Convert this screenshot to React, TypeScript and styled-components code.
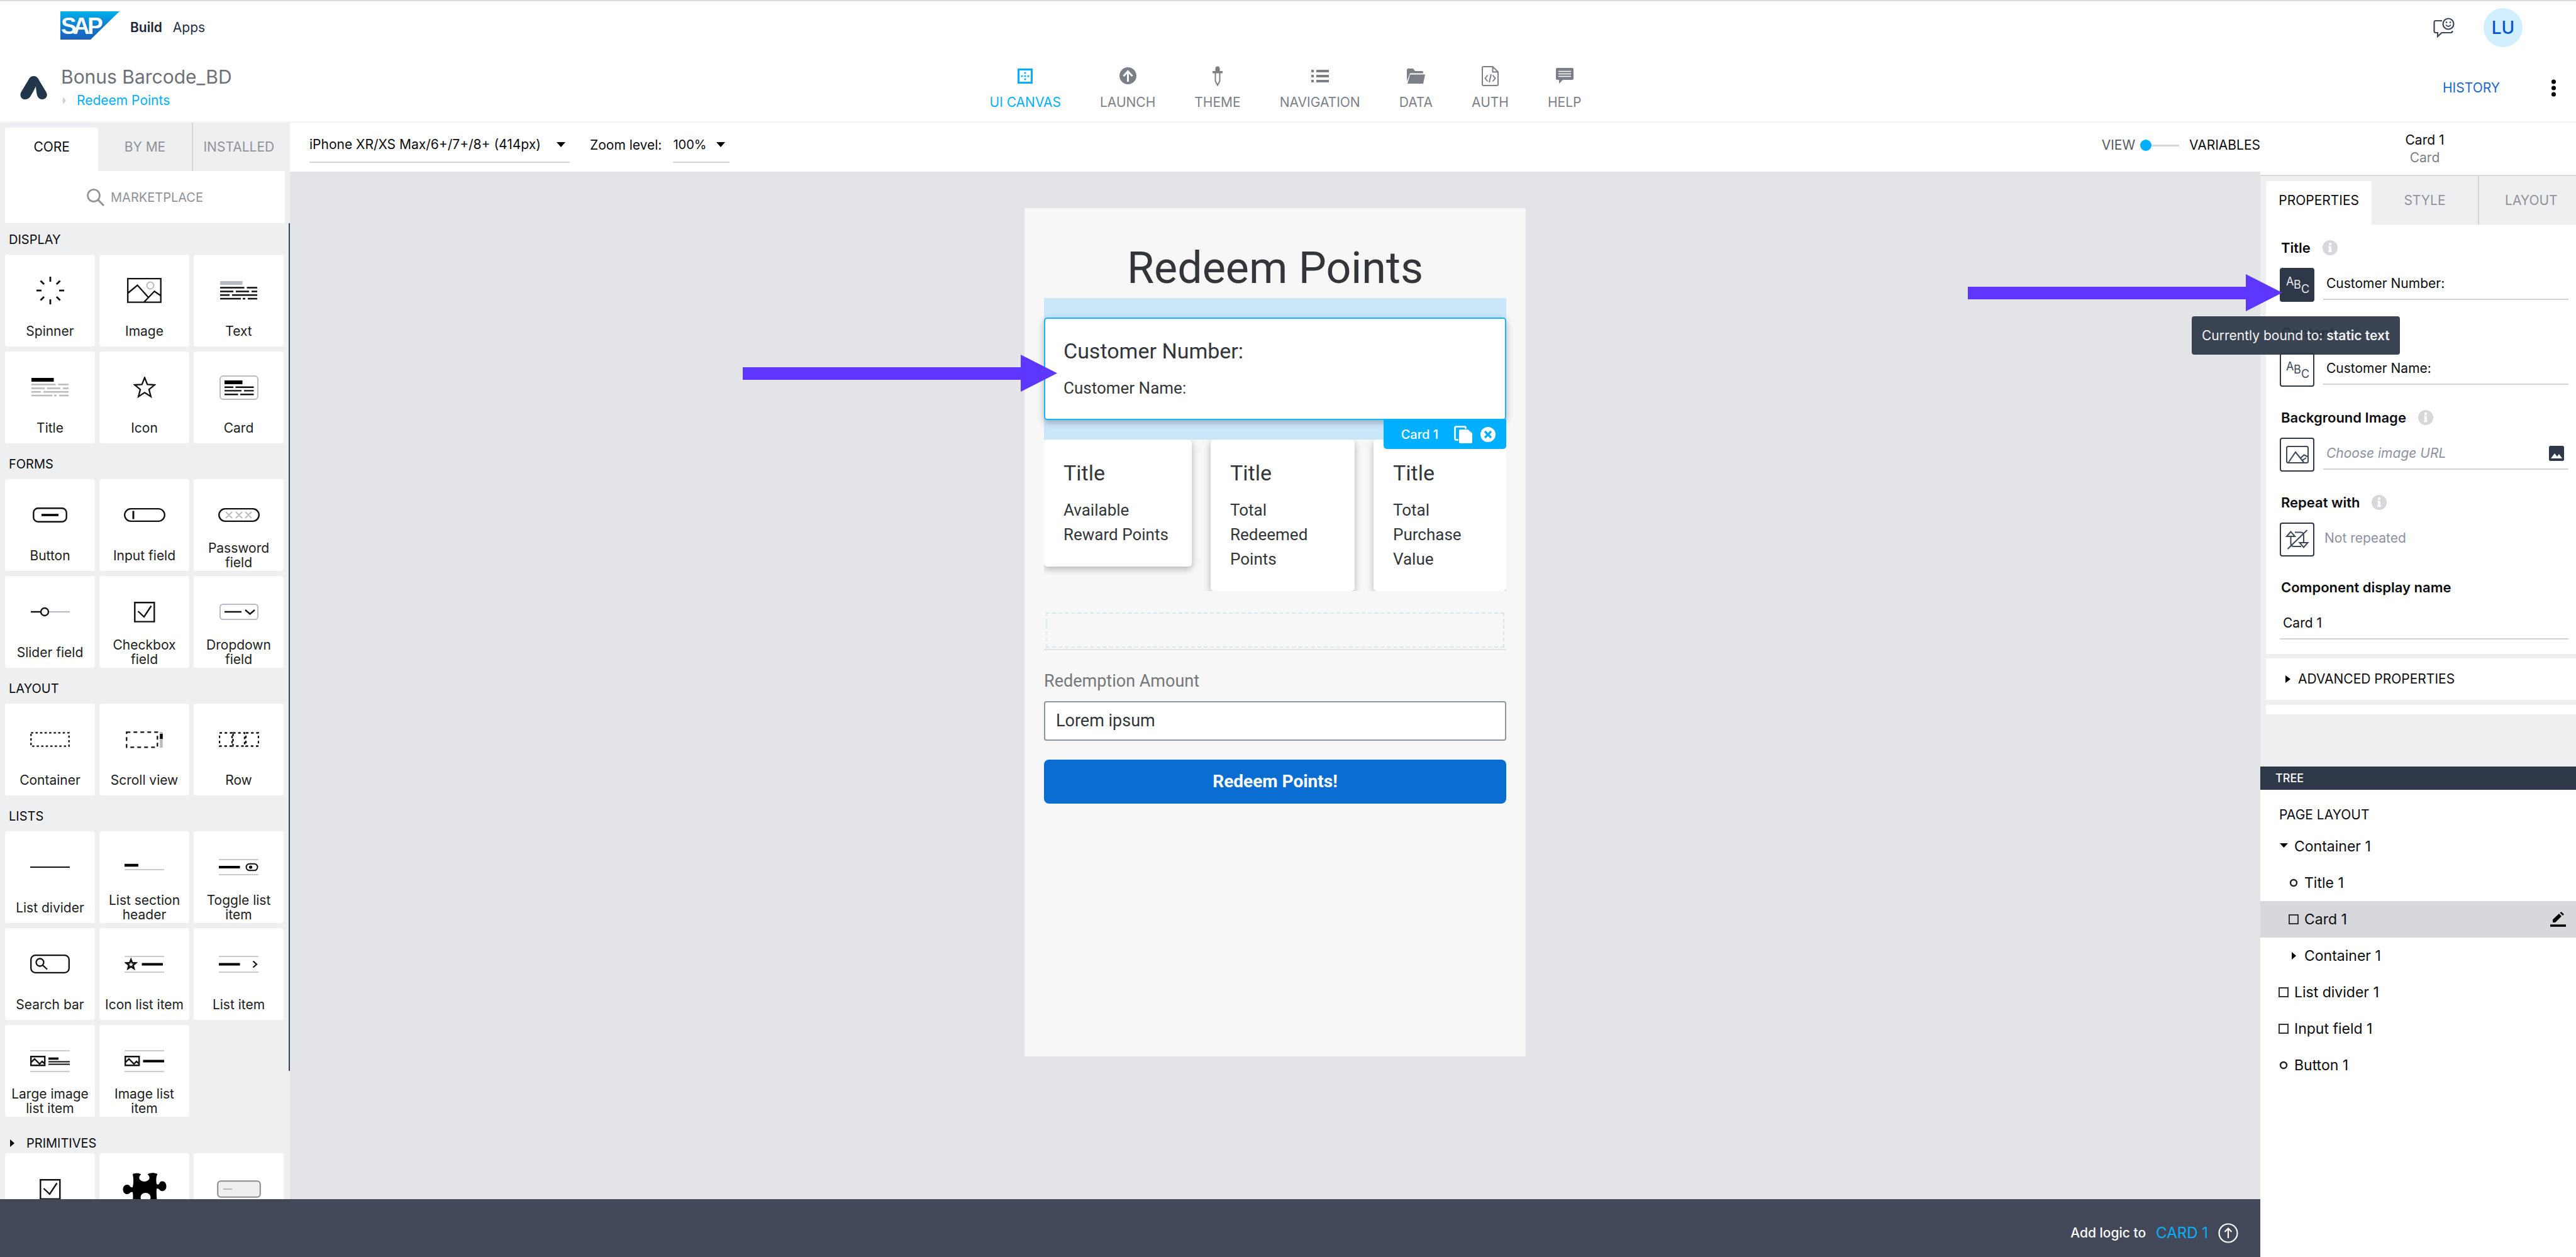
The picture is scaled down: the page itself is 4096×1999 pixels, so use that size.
import React from "react";
import styled, { createGlobalStyle, css } from "styled-components";

const ui = `Inter, "Liberation Sans", sans-serif`;
const device = `Roboto, "Liberation Sans", sans-serif`;
const c = {
  ink: "#0b0c0f",
  navy: "#2f3848",
  slate: "#434858",
  grey: "#7b7f88",
  muted: "#8f9299",
  line: "#d5d6dc",
  panel: "#eeeff1",
  canvas: "#e3e4e8",
  sky: "#00b0ff",
  faint: "#b9bbc2",
};

const Global = createGlobalStyle`
  *, *::before, *::after { box-sizing: border-box; }
  body { margin: 0; background: #fff; overflow: hidden; }
  button, input, select { font: inherit; color: inherit; margin: 0; }
  h1, h2, h3, p, ul { margin: 0; padding: 0; font-weight: 400; }
  li { list-style: none; }
  svg { display: block; flex: none; }
`;

const Shell = styled.div`
  display: flex;
  flex-direction: column;
  height: 100vh;
  overflow: hidden;
  background: #fff;
  color: ${c.ink};
  font: 400 21px/28px ${ui};
`;
const BareButton = styled.button`
  display: flex;
  align-items: center;
  padding: 0;
  border: 0;
  background: none;
  cursor: pointer;
`;

/* ---------- header ---------- */
const Header = styled.header`
  flex: none;
  border-top: 2px solid #dddddd;
  border-bottom: 2px solid #f5f5f6;
`;
const TopBar = styled.div`
  display: flex;
  align-items: center;
  justify-content: space-between;
  height: 84px;
  padding: 0 85px 0 96px;
`;
const Brand = styled.div`
  display: flex;
  align-items: center;
  gap: 17px;
  color: #223044;
  strong { font-weight: 600; color: #1a2433; }
  svg { margin-bottom: 8px; }
`;
const Account = styled.div`
  display: flex;
  align-items: center;
  gap: 46px;
`;
const Avatar = styled(BareButton)`
  justify-content: center;
  width: 62px;
  height: 62px;
  border-radius: 50%;
  background: #d1efff;
  color: #0a55cf;
  font-size: 28px;
  font-weight: 500;
`;
const ProjectBar = styled.div`
  display: grid;
  grid-template-columns: 1fr auto 1fr;
  align-items: center;
  height: 107px;
  padding: 0 32px;
`;
const Project = styled.div`
  display: flex;
  align-items: center;
  gap: 22px;
`;
const ProjectName = styled.h1`
  font-size: 30px;
  line-height: 40px;
  color: #6c7078;
`;
const Crumb = styled.div`
  display: flex;
  align-items: center;
  gap: 17px;
  height: 36px;
  padding-left: 3px;
  a { color: ${c.sky}; text-decoration: none; }
`;
const Nav = styled.nav`
  display: flex;
  gap: 62px;
  margin-right: 8px;
  padding-top: 2px;
`;
const NavItem = styled.a<{ $active?: boolean }>`
  display: flex;
  flex-direction: column;
  align-items: center;
  gap: 12px;
  color: ${(p) => (p.$active ? c.sky : c.grey)};
  text-decoration: none;
`;
const NavIcon = styled.span`
  display: flex;
  align-items: center;
  height: 32px;
`;
const ProjectActions = styled.div`
  display: flex;
  align-items: center;
  justify-content: flex-end;
  gap: 82px;
  a { color: #1b66cf; text-decoration: none; }
`;

/* ---------- page body ---------- */
const Body = styled.div`
  flex: 1;
  min-height: 0;
  display: grid;
  grid-template-columns: minmax(0, 1fr) 502px;
`;
const Workspace = styled.div`
  display: flex;
  flex-direction: column;
  min-height: 0;
`;
const Upper = styled.div`
  flex: 1;
  min-height: 0;
  display: flex;
`;
const TabBar = styled.div`
  flex: none;
  display: grid;
  grid-template-columns: repeat(3, 1fr);
  height: 77px;
`;
const Tab = styled.button<{ $active?: boolean; $divided?: boolean }>`
  padding: 8px 0 7px;
  border: 0;
  border-left: ${(p) => (p.$divided ? `2px solid #d3d5da` : "0")};
  background: none;
  color: ${c.muted};
  ${(p) =>
    p.$active &&
    css`
      margin-top: 8px;
      padding-top: 0;
      border-radius: 4px 4px 0 0;
      background: #fff;
      color: ${c.ink};
    `}
`;

/* ---------- component library ---------- */
const Library = styled.aside`
  flex: none;
  display: flex;
  flex-direction: column;
  width: 461px;
  padding: 0 8px;
  background: ${c.panel};
`;
const Marketplace = styled(BareButton)`
  flex: none;
  justify-content: center;
  gap: 10px;
  height: 83px;
  background: #fff;
  color: ${c.muted};
  font-size: 20px;
`;
const Catalogue = styled.div`
  position: relative;
  flex: 1;
  min-height: 0;
  overflow: hidden;
  margin-right: -8px;
  padding-right: 10px;
`;
const ScrollThumb = styled.span`
  position: absolute;
  top: 0;
  right: 0;
  width: 2px;
  height: 1348px;
  background: #35425a;
`;
const Section = styled.section`
  padding-top: 19px;
  &:first-of-type { padding-top: 12px; }
`;
const SectionTitle = styled.h2`
  display: flex;
  align-items: center;
  height: 28px;
  margin-bottom: 10px;
  padding-left: 6px;
  font-size: 20px;
`;
const Primitives = styled(Section)`
  padding-top: 28px;
  ${SectionTitle} { gap: 19px; padding-left: 8px; margin-bottom: 2px; }
`;
const Tiles = styled.div`
  display: grid;
  grid-template-columns: repeat(3, 1fr);
  grid-auto-rows: 146px;
  gap: 8px 7px;
`;
const Tile = styled.button`
  display: flex;
  flex-direction: column;
  align-items: center;
  padding: 16px 4px 0;
  border: 0;
  border-radius: 4px;
  background: #fff;
  color: #1c1d21;
`;
const TileIcon = styled.span`
  flex: none;
  display: flex;
  align-items: center;
  height: 82px;
`;
const TileLabel = styled.span`
  display: flex;
  align-items: center;
  height: 46px;
  line-height: 23px;
`;

/* ---------- canvas ---------- */
const Stage = styled.main`
  flex: 1;
  min-width: 0;
  display: flex;
  flex-direction: column;
  background: ${c.canvas};
`;
const Toolbar = styled.div`
  flex: none;
  display: flex;
  justify-content: space-between;
  height: 78px;
  padding: 8px 0 0 31px;
  background: #fff;
`;
const ToolGroup = styled.div`
  display: flex;
  align-items: center;
  height: 56px;
`;
const Picker = styled.span<{ $wide?: boolean }>`
  position: relative;
  width: ${(p) => (p.$wide ? 414 : 90)}px;
  margin: ${(p) => (p.$wide ? "0 32px 0 0" : "0 0 0 18px")};
  &::after {
    content: "";
    position: absolute;
    right: 7px;
    top: 23px;
    border: 7px solid transparent;
    border-top: 8px solid #000;
    border-bottom: 0;
    pointer-events: none;
  }
  select {
    width: 100%;
    height: 56px;
    padding: 0;
    border: 0;
    border-bottom: 2px solid ${c.line};
    border-radius: 0;
    background: none;
    appearance: none;
    font-size: ${(p) => (p.$wide ? 21 : 20)}px;
  }
`;
const ViewSwitch = styled.label`
  display: flex;
  align-items: center;
  gap: 8px;
  color: #555962;
  b { margin-left: 8px; color: ${c.ink}; font-weight: 400; }
  input {
    appearance: none;
    display: flex;
    align-items: center;
    width: 62px;
    height: 18px;
    background: linear-gradient(${c.line}, ${c.line}) center / 100% 3px no-repeat;
  }
  input::before {
    content: "";
    width: 18px;
    height: 18px;
    border-radius: 50%;
    background: ${c.sky};
  }
`;
const Board = styled.div`
  flex: 1;
  min-height: 0;
  display: flex;
  justify-content: center;
  align-items: flex-start;
  padding-top: 58px;
`;
const Phone = styled.article`
  display: flex;
  flex-direction: column;
  width: 797px;
  min-height: 1349px;
  padding: 48px 31px 0;
  background: #f7f7f7;
  color: #32363a;
  font-family: ${device};
`;
const PhoneTitle = styled.h2`
  font-size: 70px;
  line-height: 95px;
  text-align: center;
`;
const SelectedArea = styled.div`
  position: relative;
  padding: 31px 0;
  background: #cae7f9;
`;
const DeviceCard = styled.section<{ $selected?: boolean }>`
  padding: 31px;
  background: #fff;
  border-radius: 5px;
  box-shadow: 0 4px 12px rgba(0, 0, 0, 0.28);
  font-size: 26px;
  line-height: 39px;
  h3 { margin-bottom: 18px; line-height: 44px; font-size: 34px; }
  ${(p) =>
    p.$selected &&
    css`
      padding: 29px;
      border: 2px solid #16b3ff;
    `}
`;
const CardRow = styled.div`
  display: grid;
  grid-template-columns: 235fr 229fr 211fr;
  align-items: start;
  gap: 30px;
  overflow: hidden;
`;
const CardTag = styled.div`
  position: absolute;
  z-index: 2;
  right: 0;
  bottom: -15px;
  display: flex;
  align-items: center;
  height: 47px;
  padding: 0 17px 0 28px;
  border-radius: 0 0 5px 5px;
  background: ${c.sky};
  color: #fff;
  font: 500 20px/28px ${ui};
  button + button { margin-left: 13px; }
  span { margin-right: 25px; }
`;
const Arrow = styled.svg`
  position: absolute;
  z-index: 5;
  width: 500px;
  height: 59px;
`;
const CanvasArrow = styled(Arrow)`
  top: 90px;
  right: calc(100% - 21px);
`;
const FieldArrow = styled(Arrow)`
  top: 10px;
  right: calc(100% - 4px);
`;
const ListDivider = styled.div`
  height: 63px;
  margin-top: 31px;
  padding: 3px 3px 2px;
  border-bottom: 2px solid #e1e1e1;
  &::before {
    content: "";
    display: block;
    height: 100%;
    border: 2px dashed #d5e8eb;
  }
`;
const DeviceLabel = styled.label`
  margin: 30px 0 12px;
  color: #74777a;
  font-size: 27px;
  line-height: 39px;
`;
const DeviceInput = styled.input`
  height: 63px;
  padding: 0 17px 2px;
  border: 2px solid #8e959d;
  border-radius: 4px;
  background: #fff;
  font-size: 27px;
`;
const DeviceButton = styled.button`
  height: 70px;
  margin-top: 30px;
  border: 0;
  border-radius: 8px;
  background: #096dd2;
  color: #fff;
  font-size: 28px;
  font-weight: 700;
`;
const LogicBar = styled.footer`
  flex: none;
  display: flex;
  align-items: center;
  justify-content: flex-end;
  gap: 16px;
  height: 92px;
  padding: 16px 35px 0 0;
  background: ${c.slate};
  color: #fff;
  font-weight: 500;
  a { color: #0ab0fb; font-size: 24px; font-weight: 400; text-decoration: none; }
`;

/* ---------- inspector ---------- */
const Inspector = styled.aside`
  display: flex;
  flex-direction: column;
  min-height: 0;
  background: ${c.panel};
`;
const InspectorTop = styled.div`
  flex: 1024 1 0;
  min-height: 0;
  width: calc(100% + 12px);
`;
const Subject = styled.div`
  height: 85px;
  padding: 14px 0 0 9px;
  border-bottom: 2px solid #d8d9dd;
  background: #fff;
  text-align: center;
  p:last-child { color: ${c.grey}; }
`;
const InspectorBody = styled.div`
  display: flex;
  flex-direction: column;
  padding-left: 9px;
`;
const Sheet = styled.div`
  display: flex;
  flex-direction: column;
  gap: 33px;
  padding: 21px 24px 23px 22px;
  background: #fff;
`;
const Field = styled.div`
  display: flex;
  flex-direction: column;
  gap: 16px;
`;
const FieldLabel = styled.label`
  display: flex;
  align-items: center;
  gap: 19px;
  height: 32px;
  padding-left: 2px;
  font-size: 22px;
  font-weight: 600;
`;
const FieldRow = styled.div`
  position: relative;
  display: flex;
  gap: 14px;
  height: 54px;
`;
const Binding = styled.button<{ $on?: boolean }>`
  flex: none;
  display: flex;
  align-items: center;
  justify-content: center;
  width: 55px;
  height: 54px;
  padding: 0;
  border: 2px solid ${c.navy};
  border-radius: 4px;
  background: ${(p) => (p.$on ? c.navy : "#fff")};
  color: ${(p) => (p.$on ? "#e9ebee" : "#3e4758")};
`;
const Line = styled.span`
  flex-grow: 1;
  display: flex;
  align-items: center;
  height: 51px;
  padding: 0 7px 0 5px;
  border-bottom: 2px solid #d3d4d8;
  input {
    flex: 1;
    min-width: 0;
    padding: 0;
    border: 0;
    outline: 0;
    background: none;
    line-height: 28px;
  }
  input::placeholder { color: #8d919f; font-style: italic; opacity: 1; }
`;
const Note = styled.p`
  padding: 11px 0 0 2px;
  color: #8d919f;
`;
const Tooltip = styled.div`
  position: absolute;
  z-index: 4;
  top: 77px;
  left: -140px;
  display: flex;
  align-items: center;
  gap: 6px;
  height: 61px;
  padding: 0 16px;
  border-radius: 4px;
  background: rgba(47, 56, 72, 0.94);
  color: #f3f4f6;
  white-space: nowrap;
  font-weight: 400;
  b { font-weight: 600; }
`;
const Advanced = styled(BareButton)`
  gap: 12px;
  height: 66px;
  margin: 7px 0 8px;
  padding-left: 31px;
  background: #fff;
`;
const SheetEnd = styled.div`
  height: 15px;
  background: #fff;
`;
const Tree = styled.section`
  flex: 780 1 0;
  min-height: 0;
  background: #fff;
`;
const TreeTitle = styled.h2`
  height: 37px;
  padding-left: 24px;
  background: ${c.navy};
  color: #fff;
  font-size: 18px;
  font-weight: 500;
  line-height: 37px;
`;
const TreeRoot = styled.h3`
  padding: 24px 0 5px 30px;
  font-size: 21px;
  line-height: 32px;
`;
const TreeRow = styled.li<{ $deep?: boolean; $selected?: boolean }>`
  display: flex;
  align-items: center;
  gap: 8px;
  height: 58px;
  padding: 0 16px 0 ${(p) => (p.$deep ? 44 : 28)}px;
  background: ${(p) => (p.$selected ? "#d7d8dc" : "none")};
  font-size: 23px;
  button { margin-left: auto; }
`;

/* ---------- drawings ---------- */
const stroke = (w: number, color = "#111") => ({ stroke: color, strokeWidth: w, fill: "none" });

const star = "M18 1.5l4.3 10.9 11.7.6-9.1 7.4 3 11.3L18 25.4l-9.9 6.3 3-11.3L2 13l11.7-.6z";

const TextLines = ({ bar, lines }: { bar: string; lines: string }) => (
  <svg width="60" height="30" viewBox="0 0 60 30">
    <path d="M0 3h35.5" {...stroke(6, bar)} />
    <path d="M0 10.5h38.500M42.500 10.500H59M0 16.500h21M25 16.500h21M50 16.500h9M0 22.200h15M19 22.200h40M0 28h33M36 28h4M44 28h15" {...stroke(2.4, lines)} />
  </svg>
);
const Rules = ({ h = 26, children }: { h?: number; children: React.ReactNode }) => (
  <svg width="63" height={h} viewBox={`0 0 63 ${h}`}>
    <path d={`M0 1h63M0 ${h - 1}h63`} {...stroke(1.6, c.faint)} />
    {children}
  </svg>
);
const MiniPicture = () => <path d="M1.200 10.200h22v14h-22zM2 19l5-5 8 8 4-4 4 3.500" {...stroke(2.4)} />;
const CheckBox = () => (
  <svg width="34" height="33" viewBox="0 0 34 33">
    <path d="M1.300 1.300h31v30.300h-31zM6.500 15l9.500 9L27.500 6.500" {...stroke(2.4)} />
  </svg>
);

const icons: Record<string, React.ReactNode> = {
  Spinner: (
    <svg width="46" height="46" viewBox="-23 -23 46 46">
      {[0, 45, 90, 135, 180, 225, 270, 315].map((a) => (
        <path key={a} d="M14 0h8" transform={`rotate(${a})`} {...stroke(2.8)} />
      ))}
    </svg>
  ),
  Image: (
    <svg width="55" height="40" viewBox="0 0 55 40">
      <circle cx="37" cy="12" r="5.500" {...stroke(2, c.faint)} />
      <path d="M1.200 1.200h52.500v37.500H1.200zM1 24.500L16.500 11.500 34 31M27 38.500l16.500-17.300L54 28.500" {...stroke(2.3)} />
    </svg>
  ),
  Text: <TextLines bar={c.faint} lines="#111" />,
  Title: <TextLines bar="#000" lines={c.faint} />,
  Icon: (
    <svg width="36" height="34" viewBox="0 0 36 34">
      <path d={star} {...stroke(2.3)} />
    </svg>
  ),
  Card: (
    <svg width="62" height="39" viewBox="0 0 62 39">
      <rect x="1" y="1" width="60" height="37" rx="5" {...stroke(2, c.faint)} />
      <path d="M8 11h28.500" {...stroke(6, "#000")} />
      <path d="M8 18.800h14M25.500 18.800H54.500M8 24.400h27M39 24.400h15.500M8 30.200h21.500M33 30.200h21.500" {...stroke(2.4)} />
    </svg>
  ),
  Button: (
    <svg width="55" height="24" viewBox="0 0 55 24">
      <rect x="1.300" y="1.300" width="52.400" height="21.400" rx="7" {...stroke(2.4)} />
      <path d="M14 12h27" {...stroke(3.6, "#000")} />
    </svg>
  ),
  "Input field": (
    <svg width="66" height="22" viewBox="0 0 66 22">
      <rect x="1.200" y="1.200" width="63.600" height="19.600" rx="9.800" {...stroke(2.3)} />
      <path d="M15 4.500v13" {...stroke(3)} />
    </svg>
  ),
  "Password field": (
    <svg width="66" height="22" viewBox="0 0 66 22">
      <rect x="1.200" y="1.200" width="63.600" height="19.600" rx="9.800" {...stroke(2.3)} />
      <path d="M12 6l10 10M22 6L12 16M28 6l10 10M38 6L28 16M43 6l10 10M53 6L43 16" {...stroke(2, c.faint)} />
    </svg>
  ),
  "Slider field": (
    <svg width="62" height="16" viewBox="0 0 62 16">
      <path d="M29 8h33" {...stroke(2.2, c.faint)} />
      <path d="M0 8h16" {...stroke(2.4)} />
      <circle cx="22" cy="8" r="6" {...stroke(2.4)} />
    </svg>
  ),
  "Checkbox field": <CheckBox />,
  "Dropdown field": (
    <svg width="62" height="26" viewBox="0 0 62 26">
      <rect x="1" y="1" width="60" height="24" rx="4.500" {...stroke(2, c.faint)} />
      <path d="M8 13h27M41 10l7.500 6.500L56 10" {...stroke(2.4)} />
    </svg>
  ),
  Container: (
    <svg width="63" height="24" viewBox="0 0 63 24">
      <rect x="1.300" y="1.300" width="60.400" height="21.400" strokeDasharray="3.600 3.600" {...stroke(2.3)} />
    </svg>
  ),
  "Scroll view": (
    <svg width="60" height="27" viewBox="0 0 60 27">
      <rect x="1.300" y="1.300" width="49" height="24" strokeDasharray="6 5" {...stroke(2.3)} />
      <path d="M56.500 1v25" {...stroke(4.500, c.faint)} />
      <path d="M56.500 4v8" {...stroke(4.500, "#000")} />
    </svg>
  ),
  Row: (
    <svg width="64" height="24" viewBox="0 0 64 24">
      <path d="M1 1.500h20v21H1zM22.500 1.500h18.500v21H22.500zM43 1.500h20v21H43z" strokeDasharray="4 4.200" {...stroke(2.4)} />
    </svg>
  ),
  "List divider": (
    <svg width="63" height="4" viewBox="0 0 63 4">
      <path d="M0 2h63" {...stroke(2.2)} />
    </svg>
  ),
  "List section header": (
    <svg width="63" height="12" viewBox="0 0 63 12">
      <path d="M0 3h22" {...stroke(4.500, "#000")} />
      <path d="M0 10h63" {...stroke(1.6, c.faint)} />
    </svg>
  ),
  "Toggle list item": (
    <Rules>
      <path d="M0 13h33.500" {...stroke(4, "#000")} />
      <rect x="43.500" y="7.700" width="18" height="10.600" rx="5.300" {...stroke(2)} />
      <circle cx="50.500" cy="13" r="2.600" />
    </Rules>
  ),
  "Search bar": (
    <svg width="63" height="30" viewBox="0 0 63 30">
      <rect x="1.200" y="1.200" width="60.600" height="27.600" rx="7" {...stroke(2.3)} />
      <circle cx="15.500" cy="12.500" r="6" {...stroke(2.3)} />
      <path d="M20 17l7 6.500" {...stroke(2.3)} />
    </svg>
  ),
  "Icon list item": (
    <Rules h={27}>
      <path d={star} transform="translate(2 5.500) scale(.46)" {...stroke(6)} />
      <path d="M27.500 13.500H61" {...stroke(4, "#000")} />
    </Rules>
  ),
  "List item": (
    <Rules h={27}>
      <path d="M0 13.500h33.500" {...stroke(4, "#000")} />
      <path d="M54.500 8.500l5.500 5-5.500 5" {...stroke(2.2)} />
    </Rules>
  ),
  "Large image list item": (
    <Rules h={35}>
      <MiniPicture />
      <path d="M29 13.500h16" {...stroke(3.6, "#000")} />
      <path d="M29 18.500h34M29 22.500h34" {...stroke(2)} />
    </Rules>
  ),
  "Image list item": (
    <Rules h={35}>
      <MiniPicture />
      <path d="M29.500 17.500H63" {...stroke(4, "#000")} />
    </Rules>
  ),
  Checkbox: <CheckBox />,
  Puzzle: (
    <svg width="70" height="52" viewBox="0 0 70 52">
      <path d="M16 2c5-2 10-1.500 13.500.500-3.500 2.500-4 6-2 8.500 3.500 4 10.500 4 14 0 2-2.500 1.500-6-2-8.500C44-.500 50-.500 55.500 2c-2.500 5-2.500 10-1.500 16 3.500 2 4-.500 5.500-3 4-3.500 10-.500 10 6.500s-6 9.500-10 6.500c-1.500-2-2.500-3.500-5.500-2.500-.500 6 0 16 1.500 24.500H15c1.500-7 2-12 1-19-3-1-4 .500-5.500 2C6 36 .500 32.500.500 26.500S6 17 10.500 20c1.500 2 2.500 4 5.500 3 1.500-7 1.500-14 0-21z" />
      <ellipse cx="36.500" cy="39" rx="8" ry="7" fill="#fff" />
    </svg>
  ),
  "Text box": (
    <svg width="70" height="28" viewBox="0 0 70 28">
      <rect x="1.200" y="1.200" width="67.600" height="25.600" rx="5" stroke="#8a8a8a" strokeWidth="2" fill="#efefef" />
      <path d="M10 14h14" {...stroke(1.600, "#aaa")} />
    </svg>
  ),
};

const navItems: { label: string; icon: React.ReactNode }[] = [
  {
    label: "UI CANVAS",
    icon: (
      <svg width="24" height="26" viewBox="0 0 24 26" fill="currentColor">
        <rect x="1.500" y="2.500" width="21" height="21" {...stroke(3, "currentColor")} />
        {[[12, 8], [12, 13], [12, 18], [7, 13], [17, 13]].map(([x, y]) => (
          <circle key={`${x}-${y}`} cx={x} cy={y} r="1.600" />
        ))}
      </svg>
    ),
  },
  {
    label: "LAUNCH",
    icon: (
      <svg width="27" height="27" viewBox="0 0 27 27">
        <circle cx="13.500" cy="13.500" r="13.500" fill="currentColor" />
        <path d="M13.500 23V8M6.500 14l7-7.500 7 7.500" {...stroke(3, "#fff")} />
      </svg>
    ),
  },
  {
    label: "THEME",
    icon: (
      <svg width="16" height="32" viewBox="0 0 16 32">
        <path d="M4.500 8V4a3.500 3.500 0 0 1 7 0v4H16v3.500H0V8z" fill="currentColor" />
        <path d="M4.500 11v13L8 30.500l3.500-6.500V11" {...stroke(2, "currentColor")} />
      </svg>
    ),
  },
  {
    label: "NAVIGATION",
    icon: (
      <svg width="28" height="24" viewBox="0 0 28 24">
        <path d="M8 4h20M8 12h20M8 20h20M0 4h4M0 12h4M0 20h4" {...stroke(4, "currentColor")} />
      </svg>
    ),
  },
  {
    label: "DATA",
    icon: (
      <svg width="29" height="24" viewBox="0 0 29 24" fill="currentColor">
        <path d="M0 2q0-2 2-2h8l3 4h11q2 0 2 2v1.500H5L0 20z" />
        <path d="M5 9.500h24L26 24H1z" />
      </svg>
    ),
  },
  {
    label: "AUTH",
    icon: (
      <svg width="27" height="32" viewBox="0 0 27 32">
        <path d="M3 1h14.500L26 9.500V29q0 2-2 2H3q-2 0-2-2V3q0-2 2-2zM17.500 1v8.500H26" {...stroke(2, "currentColor")} />
        <path d="M9.500 14.500l-4 5 4 5M17.500 14.500l4 5-4 5M15 13l-3 13" {...stroke(2, "currentColor")} />
      </svg>
    ),
  },
  {
    label: "HELP",
    icon: (
      <svg width="28" height="25" viewBox="0 0 28 25">
        <path d="M2 0h24q2 0 2 2v15q0 2-2 2H11l-6 6v-6H2q-2 0-2-2V2q0-2 2-2z" fill="currentColor" />
        <path d="M4 5.500h20M4 9.500h20M4 13.500h20" {...stroke(1.600, "#fff")} />
      </svg>
    ),
  },
];

const Triangle = ({ down }: { down?: boolean }) => (
  <svg width="18" height="18" viewBox="0 0 18 18">
    <path d={down ? "M3 4h13L9.500 11z" : "M6 3l7 6-7 6z"} />
  </svg>
);
const Info = () => (
  <svg width="24" height="24" viewBox="0 0 24 24">
    <circle cx="12" cy="12" r="12" fill="#d7d8dc" />
    <path d="M12 9.500v9" {...stroke(4, "#fff")} />
    <path d="M9.500 10.500H12M9 18h6" {...stroke(2, "#fff")} />
    <circle cx="12" cy="6" r="2.200" fill="#fff" />
  </svg>
);
const Abc = () => (
  <svg width="50" height="50" viewBox="0 0 50 50" fill="currentColor" fontFamily="Inter, sans-serif" fontSize="18">
    <text x="7" y="26">A</text>
    <text x="19" y="31">B</text>
    <text x="31" y="38">C</text>
  </svg>
);
const ArrowShape = () => <path d="M0 20h442V0l58 29.500L442 59V40H0z" fill="#5d36ff" />;
const Dot = () => (
  <svg width="18" height="18" viewBox="0 0 18 18">
    <circle cx="9" cy="9" r="5" {...stroke(2.400, "#222")} />
  </svg>
);
const Square = () => (
  <svg width="18" height="18" viewBox="0 0 18 18">
    <rect x="2" y="2" width="14" height="14" {...stroke(2, "#333")} />
  </svg>
);

const sections: [string, string[]][] = [
  ["DISPLAY", ["Spinner", "Image", "Text", "Title", "Icon", "Card"]],
  ["FORMS", ["Button", "Input field", "Password field", "Slider field", "Checkbox field", "Dropdown field"]],
  ["LAYOUT", ["Container", "Scroll view", "Row"]],
  [
    "LISTS",
    ["List divider", "List section header", "Toggle list item", "Search bar", "Icon list item", "List item", "Large image list item", "Image list item"],
  ],
];

const LibraryTile = ({ name, bare }: { name: string; bare?: boolean }) => (
  <Tile aria-label={name}>
    <TileIcon>{icons[name]}</TileIcon>
    {!bare && <TileLabel>{name}</TileLabel>}
  </Tile>
);

const tree = [
  { name: "Container 1", icon: <Triangle down /> },
  { name: "Title 1", icon: <Dot />, deep: true },
  { name: "Card 1", icon: <Square />, deep: true, selected: true },
  { name: "Container 1", icon: <Triangle />, deep: true },
  { name: "List divider 1", icon: <Square /> },
  { name: "Input field 1", icon: <Square /> },
  { name: "Button 1", icon: <Dot /> },
];

const AppHeader = () => (
  <Header>
    <TopBar>
      <Brand>
        <svg width="94" height="45" viewBox="0 0 94 45">
          <defs>
            <linearGradient id="brand" x1="0" y1="0" x2="0" y2="1">
              <stop offset="0" stopColor="#00b1eb" />
              <stop offset=".5" stopColor="#0c7fd0" />
              <stop offset="1" stopColor="#1e5fbb" />
            </linearGradient>
          </defs>
          <path d="M0 0h94L48 45H0z" fill="url(#brand)" />
          <text x="1 20 43" y="36" fill="#fff" fontFamily="Liberation Sans, sans-serif" fontWeight="700" fontSize="37">
            SAP
          </text>
        </svg>
        <strong>Build</strong>
        <span>Apps</span>
      </Brand>
      <Account>
        <BareButton aria-label="Feedback">
          <svg width="34" height="32" viewBox="0 0 34 32">
            <path d="M14 5H4Q1.500 5 1.500 7.500v14Q1.500 24 4 24h3v6l6.500-6H28q2.500 0 2.500-3" {...stroke(2.200, "#3c4656")} />
            <circle cx="24" cy="10" r="8.500" {...stroke(2.200, "#3c4656")} />
            <path d="M20 11.500q4 5 8 0" {...stroke(1.800, "#3c4656")} />
            <circle cx="21" cy="7.500" r="1.300" fill="#3c4656" />
            <circle cx="27" cy="7.500" r="1.300" fill="#3c4656" />
          </svg>
        </BareButton>
        <Avatar>LU</Avatar>
      </Account>
    </TopBar>
    <ProjectBar>
      <Project>
        <svg width="43" height="37" viewBox="0 0 43 37">
          <path d="M21.500 0c4 0 6.500 2 8 5.500l12 20c3.500 6-1 11.500-6 11.500-4.500 0-7-2.500-8.500-6.500C25.800 26 25.500 21 25 16.500c-2 4-5 10-8.500 15.500-2 3.500-5 5-9 5C2.500 37-1.500 31.500 1.500 25.500l12-20C15 2 17.500 0 21.500 0z" fill="#22364b" />
        </svg>
        <div>
          <ProjectName>Bonus Barcode_BD</ProjectName>
          <Crumb>
            <svg width="5" height="12" viewBox="0 0 5 12">
              <path d="M0 0l5 6-5 6z" fill="#d0d1d6" />
            </svg>
            <a href="#redeem-points">Redeem Points</a>
          </Crumb>
        </div>
      </Project>
      <Nav>
        {navItems.map((item, i) => (
          <NavItem key={item.label} href={`#${item.label.toLowerCase()}`} $active={i === 0}>
            <NavIcon>{item.icon}</NavIcon>
            {item.label}
          </NavItem>
        ))}
      </Nav>
      <ProjectActions>
        <a href="#history">HISTORY</a>
        <BareButton aria-label="More">
          <svg width="7" height="28" viewBox="0 0 7 28">
            <circle cx="3.500" cy="4" r="3.500" />
            <circle cx="3.500" cy="14" r="3.500" />
            <circle cx="3.500" cy="24" r="3.500" />
          </svg>
        </BareButton>
      </ProjectActions>
    </ProjectBar>
  </Header>
);

const ComponentLibrary = () => (
  <Library>
    <TabBar>
      <Tab $active>CORE</Tab>
      <Tab>BY ME</Tab>
      <Tab $divided>INSTALLED</Tab>
    </TabBar>
    <Marketplace>
      <svg width="28" height="28" viewBox="0 0 28 28">
        <circle cx="11" cy="11" r="9.500" {...stroke(2.600, c.muted)} />
        <path d="M18 18l9 9" {...stroke(3, c.muted)} />
      </svg>
      MARKETPLACE
    </Marketplace>
    <Catalogue>
      {sections.map(([title, names]) => (
        <Section key={title}>
          <SectionTitle>{title}</SectionTitle>
          <Tiles>
            {names.map((n) => (
              <LibraryTile key={n} name={n} />
            ))}
          </Tiles>
        </Section>
      ))}
      <Primitives>
        <SectionTitle>
          <svg width="7" height="12" viewBox="0 0 7 12">
            <path d="M0 0l7 6-7 6z" />
          </svg>
          PRIMITIVES
        </SectionTitle>
        <Tiles>
          <LibraryTile name="Checkbox" bare />
          <LibraryTile name="Puzzle" bare />
          <LibraryTile name="Text box" bare />
        </Tiles>
      </Primitives>
      <ScrollThumb />
    </Catalogue>
  </Library>
);

const Canvas = () => (
  <Stage>
    <Toolbar>
      <ToolGroup>
        <Picker $wide>
          <select aria-label="Device">
            <option>iPhone XR/XS Max/6+/7+/8+ (414px)</option>
          </select>
        </Picker>
        <label htmlFor="zoom">Zoom level:</label>
        <Picker>
          <select id="zoom">
            <option>100%</option>
          </select>
        </Picker>
      </ToolGroup>
      <ToolGroup>
        <ViewSwitch>
          VIEW
          <input type="checkbox" role="switch" />
          <b>VARIABLES</b>
        </ViewSwitch>
      </ToolGroup>
    </Toolbar>
    <Board>
      <Phone>
        <PhoneTitle>Redeem Points</PhoneTitle>
        <SelectedArea>
          <DeviceCard $selected>
            <h3>Customer Number:</h3>
            <p>Customer Name:</p>
          </DeviceCard>
          <CardTag>
            <span>Card 1</span>
            <BareButton aria-label="Duplicate">
              <svg width="29" height="28" viewBox="0 0 29 28">
                <path d="M7 22.500H3.500q-2 0-2-2V3.500q0-2 2-2h13q2 0 2 2V5" {...stroke(2.600, "#fff")} />
                <path d="M10 6h12l7 6v14q0 2-2 2H10q-2 0-2-2V8q0-2 2-2z" fill="#fff" />
              </svg>
            </BareButton>
            <BareButton aria-label="Remove">
              <svg width="24" height="24" viewBox="0 0 24 24">
                <circle cx="12" cy="12" r="12" fill="#fff" />
                <path d="M7 7l10 10M17 7L7 17" {...stroke(3.400, c.sky)} />
              </svg>
            </BareButton>
          </CardTag>
          <CanvasArrow viewBox="0 0 500 59">
            <ArrowShape />
          </CanvasArrow>
        </SelectedArea>
        <CardRow>
          <DeviceCard>
            <h3>Title</h3>
            <p>Available Reward Points</p>
          </DeviceCard>
          <DeviceCard>
            <h3>Title</h3>
            <p>Total Redeemed Points</p>
          </DeviceCard>
          <DeviceCard>
            <h3>Title</h3>
            <p>Total Purchase Value</p>
          </DeviceCard>
        </CardRow>
        <ListDivider />
        <DeviceLabel htmlFor="amount">Redemption Amount</DeviceLabel>
        <DeviceInput id="amount" defaultValue="Lorem ipsum" />
        <DeviceButton>Redeem Points!</DeviceButton>
      </Phone>
    </Board>
  </Stage>
);

const PropertyPanel = () => (
  <Inspector>
    <InspectorTop>
      <Subject>
        <p>Card 1</p>
        <p>Card</p>
      </Subject>
      <InspectorBody>
        <TabBar>
          <Tab $active>PROPERTIES</Tab>
          <Tab>STYLE</Tab>
          <Tab $divided>LAYOUT</Tab>
        </TabBar>
        <Sheet>
          <Field>
            <FieldLabel htmlFor="title">
              Title <Info />
            </FieldLabel>
            <FieldRow>
              <Binding $on aria-label="Title binding">
                <Abc />
              </Binding>
              <Line>
                <input id="title" defaultValue="Customer Number:" />
              </Line>
              <Tooltip role="tooltip">
                Currently bound to: <b>static text</b>
              </Tooltip>
              <FieldArrow viewBox="0 0 500 59">
                <ArrowShape />
              </FieldArrow>
            </FieldRow>
          </Field>
          <Field>
            <FieldLabel htmlFor="content">
              Content <Info />
            </FieldLabel>
            <FieldRow>
              <Binding aria-label="Content binding">
                <Abc />
              </Binding>
              <Line>
                <input id="content" defaultValue="Customer Name:" />
              </Line>
            </FieldRow>
          </Field>
          <Field>
            <FieldLabel htmlFor="background">
              Background Image <Info />
            </FieldLabel>
            <FieldRow>
              <Binding aria-label="Background image binding">
                <svg width="36" height="28" viewBox="0 0 36 28">
                  <rect x="1" y="1" width="34" height="26" rx="2.500" {...stroke(2, "#3e4758")} />
                  <path d="M4 26L15 10l13 16M23 19.500l5.500-5 6.500 3M26 23l6-4" {...stroke(2, "#3e4758")} />
                </svg>
              </Binding>
              <Line>
                <input id="background" placeholder="Choose image URL" />
                <BareButton aria-label="Browse images">
                  <svg width="24" height="24" viewBox="0 0 24 24">
                    <rect width="24" height="24" rx="2.500" fill={c.navy} />
                    <path d="M3 20l6-8 4 5 3-4 5 7z" fill="#fff" />
                  </svg>
                </BareButton>
              </Line>
            </FieldRow>
          </Field>
          <Field>
            <FieldLabel htmlFor="repeat">
              Repeat with <Info />
            </FieldLabel>
            <FieldRow>
              <Binding id="repeat">
                <svg width="38" height="32" viewBox="0 0 38 32">
                  <path
                    d="M2 11l6.500-7.500L15 11zM8.500 11v11q0 5 5 5H25M15 4.500h9q5 0 5 5V21M22.500 21h13L29 28.500zM34.500 1L3.500 31"
                    {...stroke(2, "#3e4758")}
                  />
                </svg>
              </Binding>
              <Note>Not repeated</Note>
            </FieldRow>
          </Field>
          <Field>
            <FieldLabel htmlFor="display-name">Component display name</FieldLabel>
            <Line>
              <input id="display-name" defaultValue="Card 1" />
            </Line>
          </Field>
        </Sheet>
        <Advanced>
          <svg width="8" height="12" viewBox="0 0 8 12">
            <path d="M0 0l8 6-8 6z" />
          </svg>
          ADVANCED PROPERTIES
        </Advanced>
        <SheetEnd />
      </InspectorBody>
    </InspectorTop>
    <Tree>
      <TreeTitle>TREE</TreeTitle>
      <TreeRoot>PAGE LAYOUT</TreeRoot>
      <ul>
        {tree.map((row, i) => (
          <TreeRow key={i} $deep={row.deep} $selected={row.selected}>
            {row.icon}
            {row.name}
            {row.selected && (
              <BareButton aria-label="Rename">
                <svg width="25" height="24" viewBox="0 0 25 24">
                  <path d="M0 22h25" {...stroke(3.600, "#000")} />
                  <path d="M4 17v-4.500L14 3l4 4L8 17zM15.500 1.800L17.500 0 22 4l-2 2z" />
                </svg>
              </BareButton>
            )}
          </TreeRow>
        ))}
      </ul>
    </Tree>
  </Inspector>
);

export default function App() {
  return (
    <Shell>
      <Global />
      <AppHeader />
      <Body>
        <Workspace>
          <Upper>
            <ComponentLibrary />
            <Canvas />
          </Upper>
          <LogicBar>
            Add logic to <a href="#card-1">CARD 1</a>
            <BareButton aria-label="Open logic">
              <svg width="32" height="32" viewBox="0 0 32 32">
                <circle cx="16" cy="16" r="14.500" {...stroke(2.200, "#fff")} />
                <path d="M16 24V9M10.500 14L16 8.500l5.500 5.500" {...stroke(2.200, "#fff")} />
              </svg>
            </BareButton>
          </LogicBar>
        </Workspace>
        <PropertyPanel />
      </Body>
    </Shell>
  );
}
